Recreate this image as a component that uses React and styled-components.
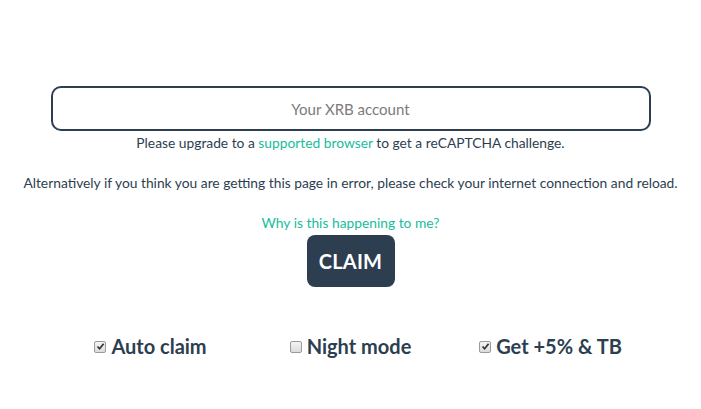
import React from "react";
import styled, { createGlobalStyle } from "styled-components";

const Global = createGlobalStyle`
  html, body { margin: 0; padding: 0; background: #fff; }
  body { font-family: Lato, "Open Sans", sans-serif; color: #2c3e50; }
`;

const Page = styled.div`
  display: flex;
  flex-direction: column;
  align-items: center;
  padding-top: 86px;
`;

const Form = styled.div`
  width: 600px;
  display: flex;
  flex-direction: column;
  align-items: center;
`;

const Input = styled.input`
  box-sizing: border-box;
  width: 600px;
  height: 45px;
  border: 2px solid #2c3e50;
  border-radius: 10px;
  text-align: center;
  font-family: Lato, sans-serif;
  font-size: 15px;
  color: #2c3e50;
  outline: none;
  &::placeholder { color: #7b7b7b; }
`;

const Note = styled.p`
  margin: ${(p) => p.$mt}px 0 0;
  font-size: 13.8px;
  line-height: 20px;
  white-space: nowrap;
  text-align: center;
  color: #2c3e50;
`;

const Link = styled.a`
  color: #18bc9c;
  text-decoration: none;
`;

const Claim = styled.button`
  margin-top: 2px;
  width: 88px;
  height: 52px;
  border: none;
  border-radius: 8px;
  background: #2c3e50;
  color: #fff;
  font-family: Lato, sans-serif;
  font-weight: 700;
  font-size: 20px;
  letter-spacing: 0.2px;
`;

const Options = styled.div`
  margin-top: 45px;
  width: 600px;
  display: grid;
  grid-template-columns: repeat(3, 1fr);
`;

const Option = styled.label`
  display: flex;
  align-items: center;
  justify-content: center;
  gap: 5px;
  font-size: 20px;
  font-weight: 700;
  color: #2c3e50;
  line-height: 28px;
`;

const Box = styled.span`
  box-sizing: border-box;
  width: 12px;
  height: 12px;
  border: 1px solid #9a9a9a;
  border-radius: 2px;
  background: linear-gradient(#f4f4f4, #dcdcdc);
  display: inline-flex;
  align-items: center;
  justify-content: center;
  margin-top: 1px;
`;

const Check = ({ on }) => (
  <Box>
    {on && (
      <svg width="9" height="9" viewBox="0 0 9 9">
        <path d="M1.5 4.5 L3.6 6.8 L7.6 1.8" fill="none" stroke="#333" strokeWidth="1.7" />
      </svg>
    )}
  </Box>
);

export default function App() {
  return (
    <Page>
      <Global />
      <Form>
        <Input placeholder="Your XRB account" />
        <Note $mt={2}>
          Please upgrade to a <Link href="#">supported browser</Link> to get a reCAPTCHA challenge.
        </Note>
      </Form>
      <Note $mt={20}>
        Alternatively if you think you are getting this page in error, please check your internet connection and reload.
      </Note>
      <Note $mt={20}>
        <Link href="#">Why is this happening to me?</Link>
      </Note>
      <Claim>CLAIM</Claim>
      <Options>
        <Option><Check on /> Auto claim</Option>
        <Option><Check /> Night mode</Option>
        <Option><Check on /> Get +5% &amp; TB</Option>
      </Options>
    </Page>
  );
}
